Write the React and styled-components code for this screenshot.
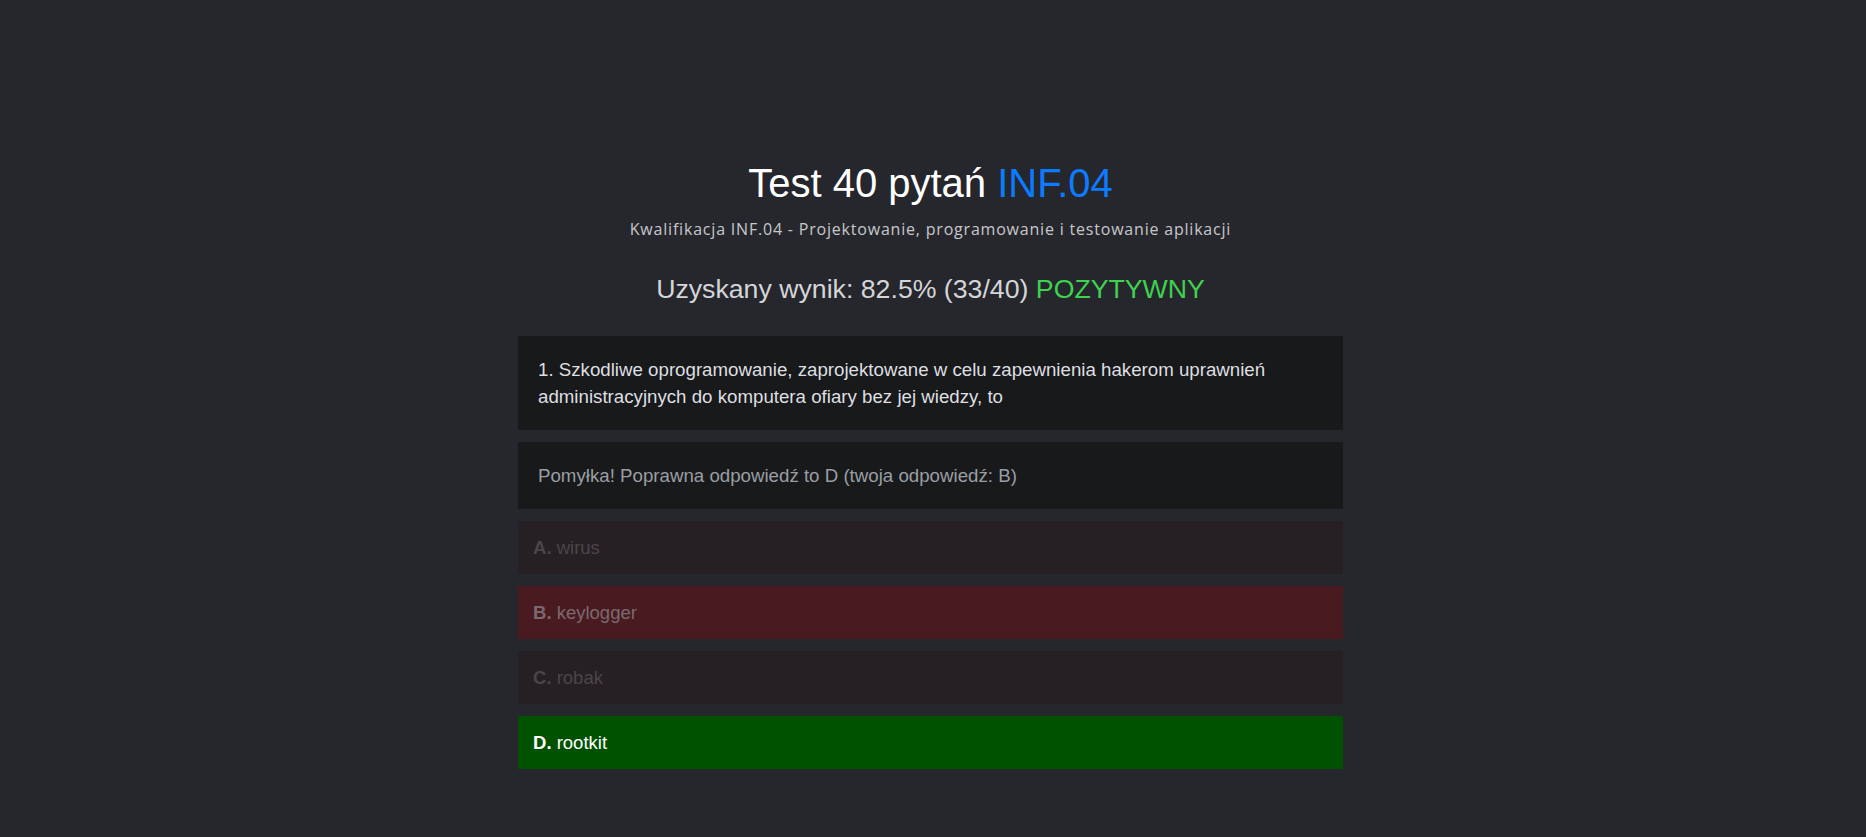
import React from 'react';
import styled, { createGlobalStyle } from 'styled-components';

const GlobalStyle = createGlobalStyle`
    html, body {
        margin: 0;
        padding: 0;
        background: #26272d;
    }
    body {
        font-family: "Liberation Sans", Arial, sans-serif;
        color: #dcdcdc;
    }
`;

const Page = styled.main`
    min-height: 837px;
    padding: 159px 5px 60px 0;
    box-sizing: border-box;
    display: flex;
    flex-direction: column;
    align-items: center;
`;

const Title = styled.h1`
    margin: 0;
    font-size: 40px;
    line-height: 48px;
    font-weight: 400;
    color: #ffffff;
    text-align: center;
`;

const Accent = styled.span`
    color: ${(p) => p.$color};
`;

const Subtitle = styled.p`
    margin: 11px 0 0;
    font-family: "Open Sans", "Noto Sans", sans-serif;
    font-size: 16px;
    letter-spacing: 0.8px;
    line-height: 22px;
    color: #c6c7ca;
    text-align: center;
`;

const Score = styled.h3`
    margin: 33px 0 0;
    font-size: 26.7px;
    line-height: 32px;
    font-weight: 400;
    color: #d4d5d8;
    text-align: center;
`;

const Quiz = styled.section`
    width: 825px;
    margin-top: 31px;
    display: flex;
    flex-direction: column;
    gap: 12px;
`;

const Panel = styled.div`
    background: #18191b;
    padding: 20px;
    font-size: 18.7px;
    line-height: 27px;
    color: ${(p) => (p.$muted ? '#9a9ea4' : '#dedfe1')};
`;

const optionColors = {
    idle: { bg: '#261f24', fg: '#4b4549' },
    wrong: { bg: '#4a1a21', fg: '#7a6a6e' },
    right: { bg: '#005200', fg: '#ffffff' },
};

const Option = styled.div`
    background: ${(p) => optionColors[p.$state].bg};
    color: ${(p) => optionColors[p.$state].fg};
    padding: 14px 15px;
    font-size: 18.5px;
    line-height: 25px;
`;

const Letter = styled.b`
    font-weight: 700;
`;

const answers = [
    { key: 'A', text: 'wirus', state: 'idle' },
    { key: 'B', text: 'keylogger', state: 'wrong' },
    { key: 'C', text: 'robak', state: 'idle' },
    { key: 'D', text: 'rootkit', state: 'right' },
];

export default function App() {
    return (
        <>
            <GlobalStyle />
            <Page>
                <Title>
                    Test 40 pytań <Accent $color="#0b7bff">INF.04</Accent>
                </Title>
                <Subtitle>Kwalifikacja INF.04 - Projektowanie, programowanie i testowanie aplikacji</Subtitle>
                <Score>
                    Uzyskany wynik: 82.5% (33/40) <Accent $color="#3fd24f">POZYTYWNY</Accent>
                </Score>
                <Quiz>
                    <Panel>
                        1. Szkodliwe oprogramowanie, zaprojektowane w celu zapewnienia hakerom uprawnień
                        administracyjnych do komputera ofiary bez jej wiedzy, to
                    </Panel>
                    <Panel $muted>Pomyłka! Poprawna odpowiedź to D (twoja odpowiedź: B)</Panel>
                    {answers.map((a) => (
                        <Option key={a.key} $state={a.state}>
                            <Letter>{a.key}.</Letter> {a.text}
                        </Option>
                    ))}
                </Quiz>
            </Page>
        </>
    );
}
